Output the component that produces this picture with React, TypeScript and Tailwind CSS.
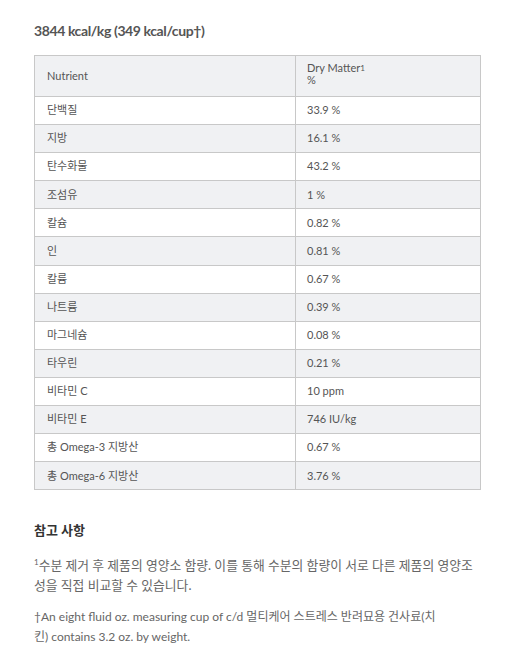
import React from "react";

const rows: [string, string][] = [
  ["단백질", "33.9 %"],
  ["지방", "16.1 %"],
  ["탄수화물", "43.2 %"],
  ["조섬유", "1 %"],
  ["칼슘", "0.82 %"],
  ["인", "0.81 %"],
  ["칼륨", "0.67 %"],
  ["나트륨", "0.39 %"],
  ["마그네슘", "0.08 %"],
  ["타우린", "0.21 %"],
  ["비타민 C", "10 ppm"],
  ["비타민 E", "746 IU/kg"],
  ["총 Omega-3 지방산", "0.67 %"],
  ["총 Omega-6 지방산", "3.76 %"],
];

export default function App() {
  return (
    <div
      className="w-[512px] h-[670px] bg-white pl-[34px] pr-[31px] pt-[20px]"
      style={{ fontFamily: "Lato, 'Noto Sans CJK KR', sans-serif" }}
    >
      <h2 className="text-[14px] font-bold tracking-[-0.4px] leading-[22px] text-[#555]">3844 kcal/kg (349 kcal/cup†)</h2>
      <table className="mt-[13px] w-[447px] border-collapse border border-[#c8c8c8] text-[11px] text-[#555]">
        <thead>
          <tr className="bg-[#f0f1f3]">
            <th className="h-[41px] w-[261px] border border-[#c8c8c8] pl-[12px] text-left font-normal">Nutrient</th>
            <th className="h-[41px] border border-[#c8c8c8] pl-[11px] text-left align-top pt-[6px] font-normal leading-[12px]">
              Dry Matter<sup className="text-[8px] relative -top-[1px]">1</sup>
              <br />%
            </th>
          </tr>
        </thead>
        <tbody>
          {rows.map(([n, v], i) => (
            <tr key={n} className={i % 2 === 1 ? "bg-[#f0f1f3]" : "bg-white"}>
              <td className="h-[28.1px] border border-[#c8c8c8] pl-[12px]">{n}</td>
              <td className="h-[28.1px] border border-[#c8c8c8] pl-[11px]">{v}</td>
            </tr>
          ))}
        </tbody>
      </table>
      <h3 className="mt-[30px] text-[13px] font-bold leading-[20px] text-[#333]">참고 사항</h3>
      <p className="mt-[15px] text-[12.8px] leading-[20px] text-[#666] whitespace-nowrap">
        <span className="align-top text-[8px] leading-[14px]">1</span>수분 제거 후 제품의 영양소 함량. 이를 통해 수분의 함량이 서로 다른 제품의 영양조
        <br />
        성을 직접 비교할 수 있습니다.
      </p>
      <p className="mt-[12px] text-[12px] leading-[20px] text-[#666] whitespace-nowrap">
        †An eight fluid oz. measuring cup of c/d 멀티케어 스트레스 반려묘용 건사료(치
        <br />
        킨) contains 3.2 oz. by weight.
      </p>
    </div>
  );
}
